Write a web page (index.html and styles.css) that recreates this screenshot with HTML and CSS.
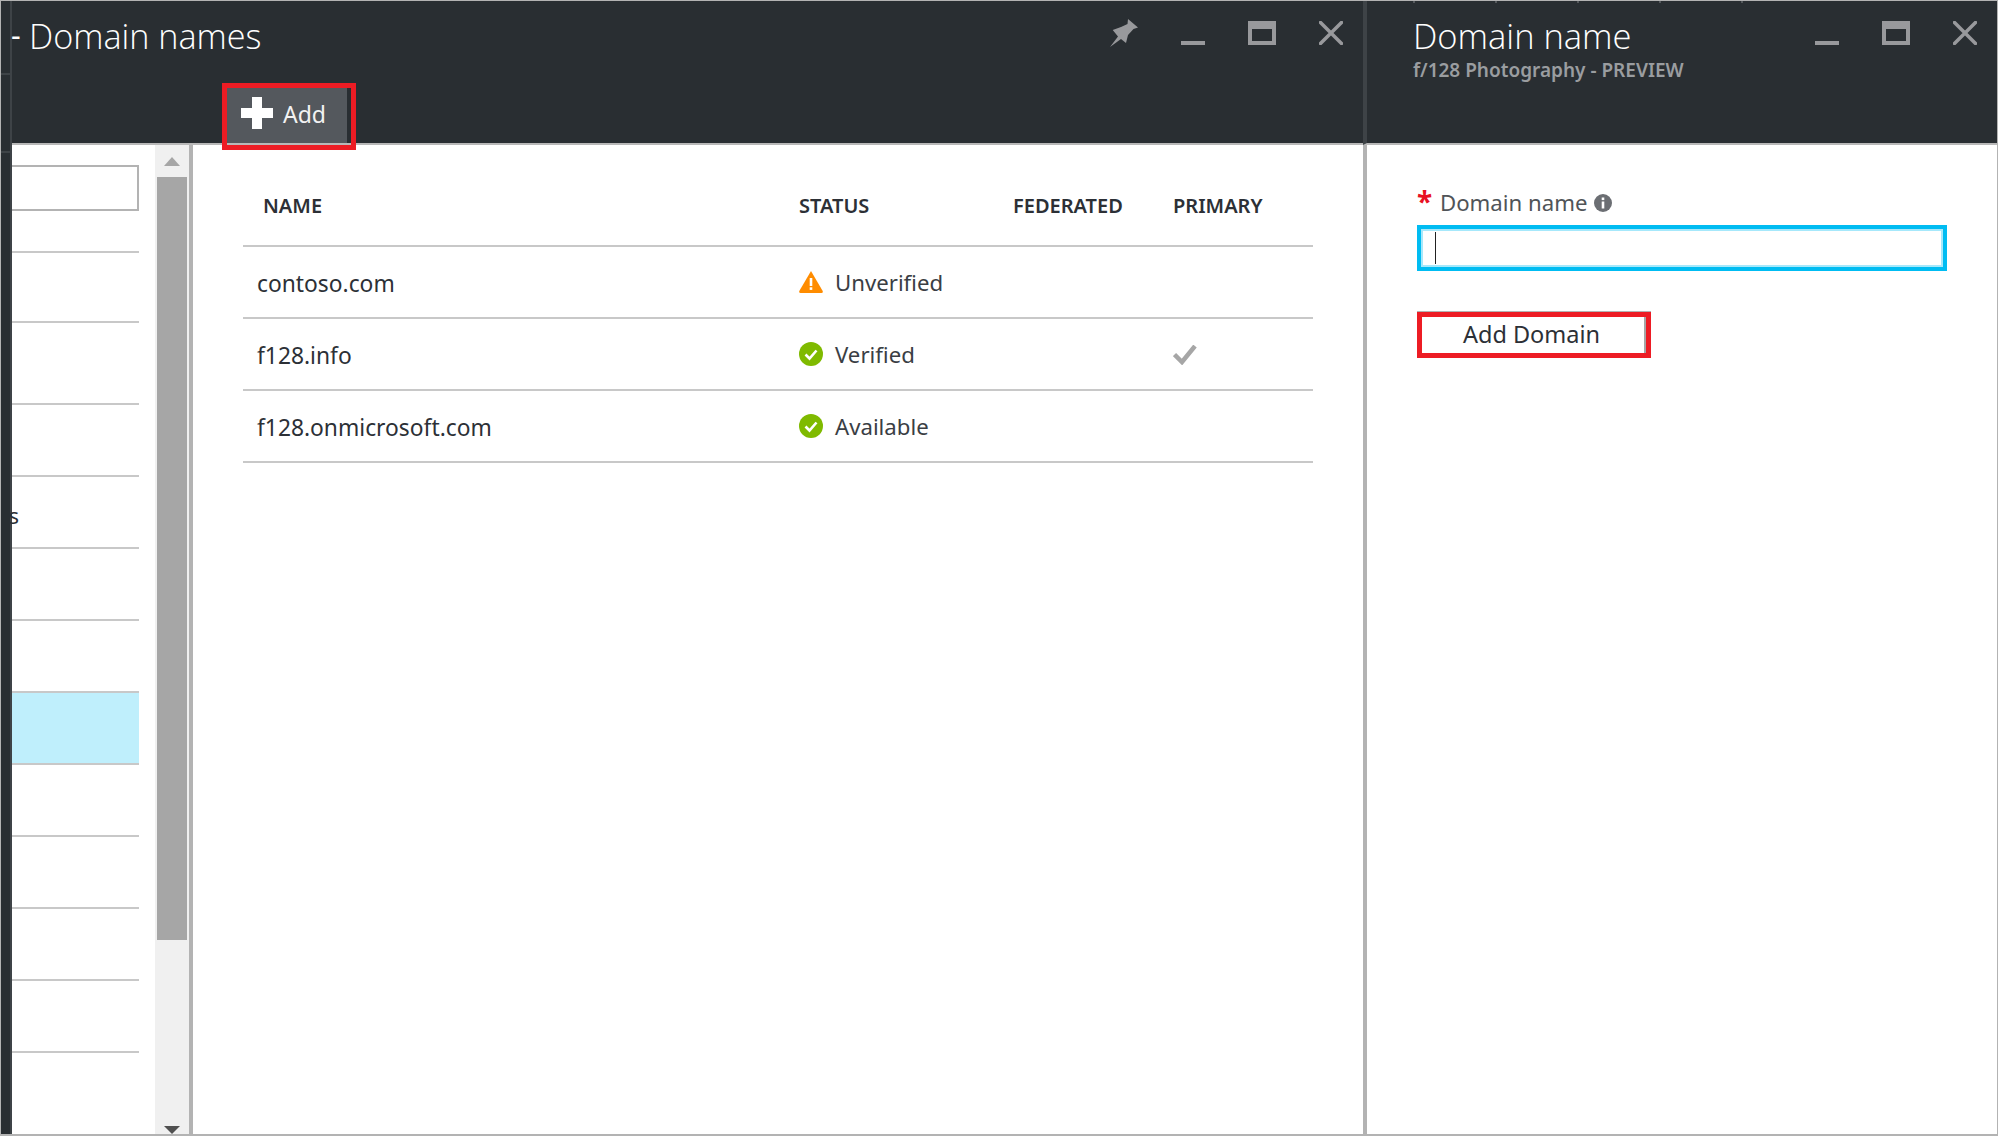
FILE: index.html
```html
<!DOCTYPE html>
<html lang="en">
<head>
  <meta charset="UTF-8">
  <title>Domain names</title>
  <link rel="stylesheet" href="styles.css">
</head>
<body>
  <div class="frame">
    <div class="rail">
      <div class="rail-line first"></div>
      <div class="rail-line second"></div>
    </div>

    <div class="blade blade-main">
      <header class="blade-head">
        <div class="head-top">
          <span class="dash">-</span>
          <h1 class="title">Domain names</h1>
          <div class="controls">
            <svg class="ctl pin" width="28" height="28" viewBox="0 0 28 28"><path d="M18 0 L28 8.500 L23.500 10 L18 16 L16 24 L11 20 L0 28 L8 17.500 L2.700 11 L11 8 L17.500 5 Z"/></svg>
            <svg class="ctl" width="24" height="24" viewBox="0 0 24 24"><rect x="0" y="20" width="24" height="4"/></svg>
            <svg class="ctl" width="28" height="24" viewBox="0 0 28 24"><path fill-rule="evenodd" d="M0 0H28V24H0Z M4 8V20H24V8Z"/></svg>
            <svg class="ctl" width="24" height="24" viewBox="0 0 24 24"><path class="cross" d="M1.500 1.500 L22.500 22.500 M22.500 1.500 L1.500 22.500"/></svg>
          </div>
        </div>
        <div class="toolbar">
          <button class="add-btn">
            <svg class="plus" width="32" height="32" viewBox="0 0 32 32"><path fill="#fff" d="M11 0H21V11H32V21H21V32H11V21H0V11H11Z"/></svg>
            <span>Add</span>
          </button>
        </div>
      </header>

      <div class="blade-body">
        <div class="list">
          <div class="list-search"></div>
          <div class="list-row first"></div>
          <div class="list-row short"></div>
          <div class="list-row tall"></div>
          <div class="list-row"></div>
          <div class="list-row"><span class="cut">s</span></div>
          <div class="list-row"></div>
          <div class="list-row"></div>
          <div class="list-row selected"></div>
          <div class="list-row"></div>
          <div class="list-row"></div>
          <div class="list-row"></div>
          <div class="list-row"></div>
        </div>

        <div class="scrollbar">
          <div class="arrow-up"></div>
          <div class="thumb"></div>
          <div class="arrow-down"></div>
        </div>

        <div class="content">
          <div class="row head">
            <div class="cell-name">NAME</div>
            <div>STATUS</div>
            <div>FEDERATED</div>
            <div>PRIMARY</div>
          </div>
          <div class="row">
            <div class="name">contoso.com</div>
            <div class="status">
              <svg width="24" height="22" viewBox="0 0 24 22"><path fill="#ff8c00" d="M12 0 L23.700 20 Q24.200 22 22.500 22 H1.500 Q-0.200 22 0.300 20 Z"/><rect x="10.700" y="7" width="2.600" height="8" fill="#fff"/><rect x="10.700" y="16.300" width="2.600" height="2.600" fill="#fff"/></svg>
              <span>Unverified</span>
            </div>
            <div></div>
            <div></div>
          </div>
          <div class="row">
            <div class="name">f128.info</div>
            <div class="status">
              <svg width="24" height="24" viewBox="0 0 24 24"><circle cx="12" cy="12" r="12" fill="#7fba00"/><path d="M6.500 12.500 L10.500 16.500 L17.500 8.500" fill="none" stroke="#fff" stroke-width="2.600"/></svg>
              <span>Verified</span>
            </div>
            <div></div>
            <div>
              <svg class="primary-check" width="24" height="20" viewBox="0 0 24 20"><path d="M1.500 9.500 L9 17 L22 1" fill="none" stroke="#a6a6a6" stroke-width="4.500"/></svg>
            </div>
          </div>
          <div class="row">
            <div class="name">f128.onmicrosoft.com</div>
            <div class="status">
              <svg width="24" height="24" viewBox="0 0 24 24"><circle cx="12" cy="12" r="12" fill="#7fba00"/><path d="M6.500 12.500 L10.500 16.500 L17.500 8.500" fill="none" stroke="#fff" stroke-width="2.600"/></svg>
              <span>Available</span>
            </div>
            <div></div>
            <div></div>
          </div>
        </div>
      </div>
    </div>

    <div class="blade blade-side">
      <header class="blade-head">
        <div class="ticks"></div>
        <div class="head-top side-top">
          <div>
            <h2 class="title">Domain name</h2>
            <div class="subtitle">f/128 Photography - PREVIEW</div>
          </div>
          <div class="controls">
            <svg class="ctl" width="24" height="24" viewBox="0 0 24 24"><rect x="0" y="20" width="24" height="4"/></svg>
            <svg class="ctl" width="28" height="24" viewBox="0 0 28 24"><path fill-rule="evenodd" d="M0 0H28V24H0Z M4 8V20H24V8Z"/></svg>
            <svg class="ctl" width="24" height="24" viewBox="0 0 24 24"><path class="cross" d="M1.500 1.500 L22.500 22.500 M22.500 1.500 L1.500 22.500"/></svg>
          </div>
        </div>
      </header>

      <div class="form">
        <div class="field-label">
          <span class="req">*</span>
          <span class="label-text">Domain name</span>
          <svg width="18" height="18" viewBox="0 0 18 18"><circle cx="9" cy="9" r="9" fill="#6b6e73"/><rect x="7.700" y="3.500" width="2.600" height="2.600" fill="#fff"/><rect x="7.700" y="7.500" width="2.600" height="7" fill="#fff"/></svg>
        </div>
        <div class="input-box"><span class="caret"></span></div>
        <button class="domain-btn">Add Domain</button>
      </div>
    </div>
  </div>
</body>
</html>
```

FILE: styles.css
```css
*, *::before, *::after {
  box-sizing: border-box;
}

html, body {
  margin: 0;
  padding: 0;
}

body {
  width: 1998px;
  height: 1136px;
  overflow: hidden;
  background: #fff;
  font-family: "Noto Sans", "Open Sans", sans-serif;
  color: #2c3036;
}

.frame {
  display: flex;
  height: 1136px;
  border: 1px solid #b3b3b3;
  border-width: 1px 1px 2px 1px;
}

.rail {
  width: 11px;
  flex: none;
  background: #292e32;
  border-right: 2px solid #3e4347;
}

.rail-line {
  height: 2px;
  background: #3e4347;
}

.rail-line.first {
  margin-top: 72px;
}

.rail-line.second {
  margin-top: 76px;
}

.blade {
  display: flex;
  flex-direction: column;
}

.blade-main {
  width: 1351px;
  flex: none;
}

.blade-side {
  flex: 1;
  border-left: 4px solid #b3b3b3;
}

/* header */

.blade-head {
  position: relative;
  height: 144px;
  flex: none;
  background: #292e32;
  border-bottom: 2px solid #b8b8b8;
  color: #fff;
}

.blade-side .blade-head {
  margin-left: -4px;
  border-left: 4px solid #3e4347;
}

.ticks {
  position: absolute;
  left: 46px;
  top: 0;
  width: 330px;
  height: 2px;
  background: linear-gradient(to right, #55595d 2px, transparent 2px) 0 0 / 82px 2px repeat-x;
}

.head-top {
  display: flex;
  align-items: flex-start;
  height: 81px;
}

.dash {
  font-size: 30px;
  line-height: 68px;
  width: 17px;
  margin-left: -1px;
  margin-right: 1px;
}

.title {
  margin: 0;
  font-family: "Open Sans", sans-serif;
  font-size: 34.2px;
  font-weight: 300;
  line-height: 70px;
}

.controls {
  margin-left: auto;
  display: flex;
  align-items: flex-end;
  gap: 43px;
  height: 44px;
  padding-right: 20px;
}

.ctl {
  fill: #98999c;
  display: block;
}

.cross {
  fill: none;
  stroke: #98999c;
  stroke-width: 3.500;
  stroke-linecap: square;
}

.pin {
  margin-bottom: -2px;
}

.side-top {
  padding-left: 46px;
}

.side-top .title {
  font-size: 34.5px;
  line-height: 44px;
  margin-top: 13px;
}

.subtitle {
  color: #9a9da0;
  font-size: 19px;
  font-weight: 600;
  line-height: 24px;
}

.toolbar {
  padding-left: 215px;
  height: 61px;
  padding-top: 6px;
}

.add-btn {
  position: relative;
  display: flex;
  align-items: center;
  gap: 10px;
  width: 120px;
  height: 55px;
  padding: 0 0 3px 14px;
  background: #54585d;
  border: 0;
  color: #f2f2f2;
  font-family: inherit;
  font-size: 23px;
}

.plus {
  margin-top: -2px;
}

/* red callout round the button */
.add-btn::after {
  content: "";
  position: absolute;
  left: -5px;
  top: -5px;
  width: 134px;
  height: 67px;
  border: 5px solid #ed1c24;
}

/* body */

.blade-body {
  flex: 1;
  display: flex;
  min-height: 0;
}

.list {
  width: 127px;
  flex: none;
  padding-top: 20px;
}

.list-search {
  height: 46px;
  border: 2px solid #b3b3b3;
  border-left: 0;
}

.list-row {
  height: 72px;
  border-bottom: 2px solid #c8c8c8;
}

.list-row.first {
  height: 42px;
}

.list-row.short {
  height: 70px;
}

.list-row.tall {
  height: 82px;
}

.list-row.selected {
  background: #bfeffc;
}

.cut {
  display: block;
  font-size: 22px;
  line-height: 28px;
  padding-top: 24px;
  margin-left: -6px;
  width: 13px;
  overflow: hidden;
  text-align: right;
}

.scrollbar {
  width: 34px;
  flex: none;
  margin-left: 16px;
  padding: 0 2px;
  background: #f0f0f0;
  display: flex;
  flex-direction: column;
  align-items: center;
}

.arrow-up {
  margin-top: 12px;
  flex: none;
  width: 0;
  height: 0;
  border: 8px solid transparent;
  border-top: 0;
  border-bottom: 9px solid #a6a6a6;
}

.thumb {
  margin-top: 11px;
  width: 30px;
  height: 763px;
  flex: none;
  background: #a6a6a6;
}

.arrow-down {
  margin-top: auto;
  flex: none;
  width: 0;
  height: 0;
  border: 8px solid transparent;
  border-bottom: 0;
  border-top: 8px solid #505050;
}

.content {
  flex: 1;
  border-left: 4px solid #b3b3b3;
  padding: 0 50px 0 50px;
}

.row {
  display: grid;
  grid-template-columns: 556px 214px 160px 1fr;
  align-items: center;
  height: 72px;
  border-bottom: 2px solid #c8c8c8;
  font-size: 22.8px;
}

.row.head {
  height: 102px;
  padding-top: 20px;
  font-size: 20px;
  font-weight: 600;
}

.cell-name {
  padding-left: 20px;
}

.name {
  padding: 3px 0 0 14px;
}

.status {
  display: flex;
  align-items: center;
  gap: 12px;
  font-size: 22.2px;
  color: #3a3e44;
}

.primary-check {
  display: block;
  margin-top: 2px;
}

/* side form */

.form {
  padding: 43px 0 0 50px;
}

.field-label {
  display: flex;
  align-items: center;
  gap: 7px;
  height: 30px;
  font-size: 22.2px;
  color: #505458;
}

.label-text {
  margin-top: -2px;
}

.req {
  color: #e81123;
  font-size: 28px;
  font-weight: 700;
  line-height: 30px;
  width: 16px;
  margin-top: -4px;
}

.input-box {
  width: 530px;
  height: 46px;
  margin-top: 7px;
  padding: 0 0 0 14px;
  border: 4px solid #00bcf2;
  box-shadow: inset 0 0 0 2px #a6e8fb;
  display: flex;
  align-items: center;
}

.caret {
  display: block;
  width: 1px;
  height: 32px;
  background: #222;
}

.domain-btn {
  display: block;
  width: 234px;
  height: 46px;
  margin-top: 41px;
  background: #fff;
  border: 5px solid #ed1c24;
  box-shadow: inset -2px 0 0 #a6a6a6, 0 -1px 0 #b3b3b3;
  padding: 0 5px 2px 0;
  color: #2c3036;
  font-family: inherit;
  font-size: 23.5px;
}
```
